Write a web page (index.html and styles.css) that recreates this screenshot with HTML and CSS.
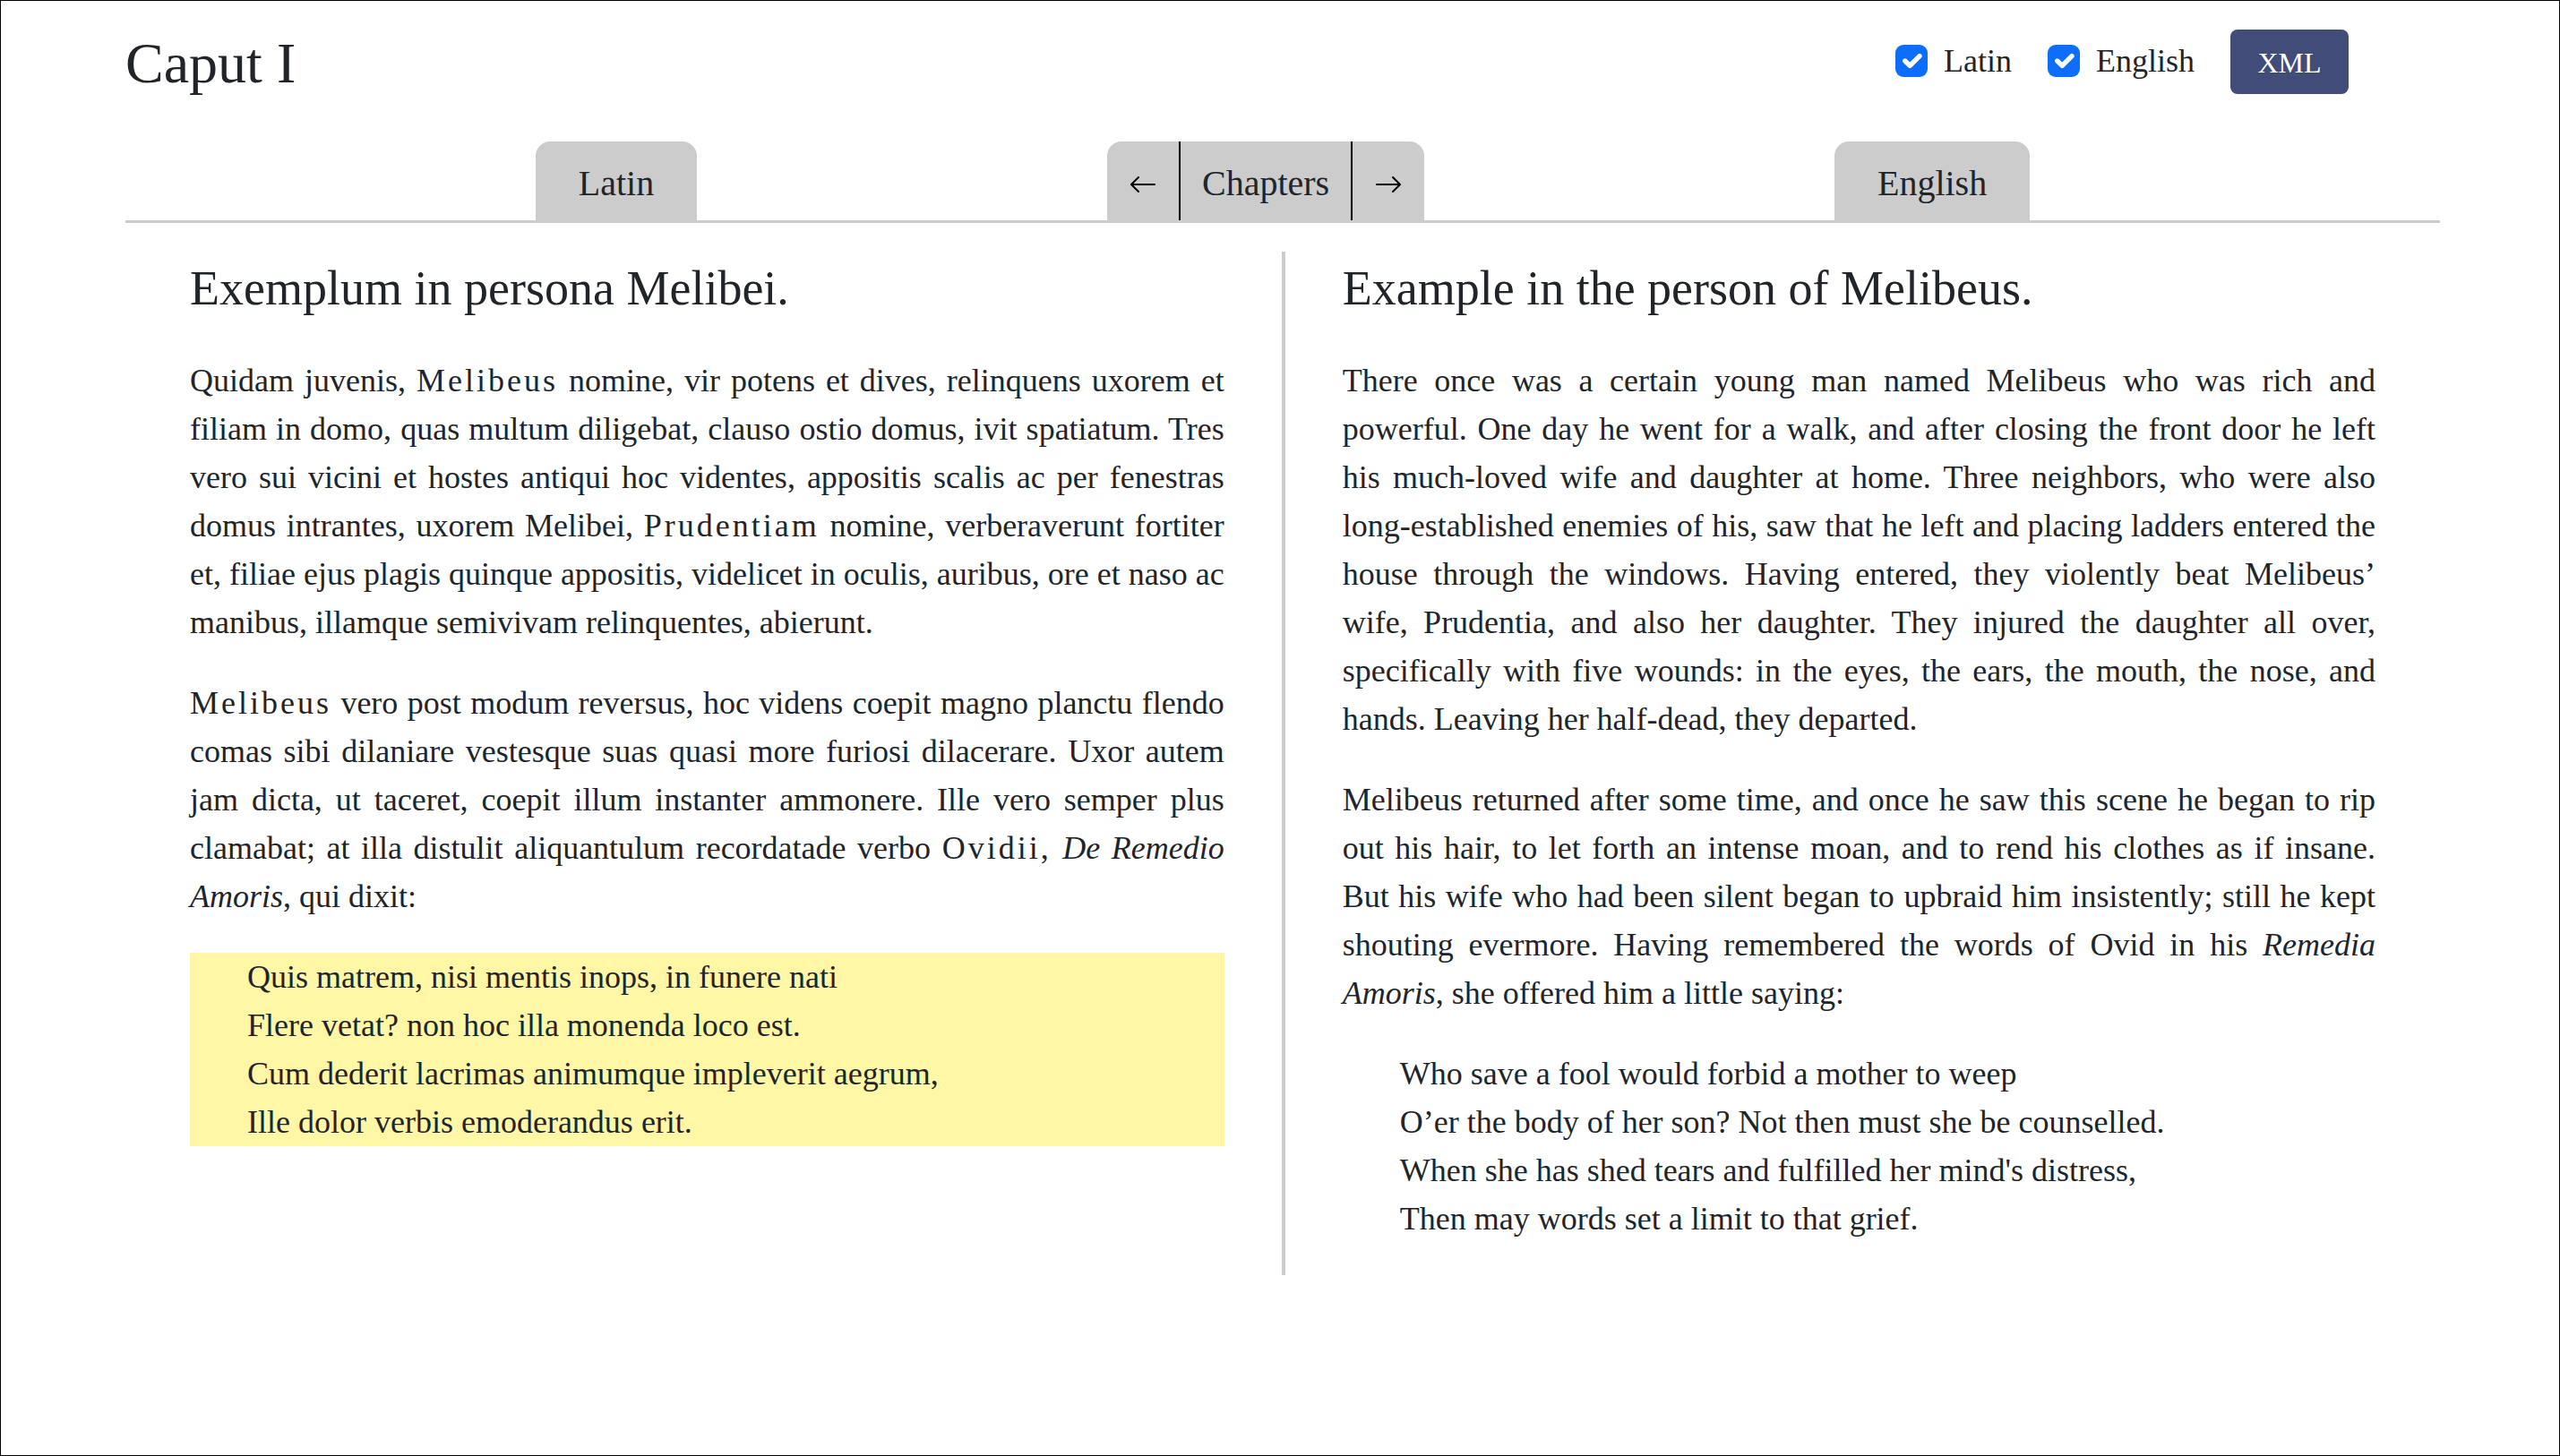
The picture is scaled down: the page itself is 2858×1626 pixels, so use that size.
FILE: index.html
```html
<!DOCTYPE html>
<html lang="en">
<head>
<meta charset="utf-8">
<title>Caput I</title>
<link rel="stylesheet" href="styles.css">
</head>
<body>
<div class="page">
  <header class="topbar">
    <h1 class="title">Caput I</h1>
    <div class="controls">
      <label class="toggle"><input class="toggle-box" type="checkbox" checked><span>Latin</span></label>
      <label class="toggle"><input class="toggle-box" type="checkbox" checked><span>English</span></label>
      <button class="xml-button" type="button">XML</button>
    </div>
  </header>

  <nav class="tabs">
    <h3 class="tab">Latin</h3>
    <div class="tab pager">
      <a class="pager-arrow" href="#" aria-label="Previous chapter">
        <svg class="arrow" viewBox="0 0 16 16"><path fill-rule="evenodd" d="M15 8a.5.5 0 0 0-.5-.5H2.707l3.147-3.146a.5.5 0 1 0-.708-.708l-4 4a.5.5 0 0 0 0 .708l4 4a.5.5 0 0 0 .708-.708L2.707 8.500H14.500A.5.5 0 0 0 15 8z"/></svg>
      </a>
      <button class="pager-list" type="button">Chapters</button>
      <a class="pager-arrow" href="#" aria-label="Next chapter">
        <svg class="arrow" viewBox="0 0 16 16"><path fill-rule="evenodd" d="M1 8a.5.5 0 0 1 .5-.5h11.793l-3.147-3.146a.5.5 0 0 1 .708-.708l4 4a.5.5 0 0 1 0 .708l-4 4a.5.5 0 0 1-.708-.708L13.293 8.500H1.500A.5.5 0 0 1 1 8z"/></svg>
      </a>
    </div>
    <h3 class="tab">English</h3>
  </nav>

  <main class="columns">
    <section class="column" lang="la">
      <h2 class="heading">Exemplum in persona Melibei.</h2>
      <p class="prose">Quidam juvenis, <span class="name">Melibeus</span> nomine, vir potens et dives, relinquens uxorem et filiam in domo, quas multum diligebat, clauso ostio domus, ivit spatiatum. Tres vero sui vicini et hostes antiqui hoc videntes, appositis scalis ac per fenestras domus intrantes, uxorem Melibei, <span class="name">Prudentiam</span> nomine, verberaverunt fortiter <span class="unbroken">et, filiae ejus plagis quinque appositis, videlicet in oculis, auribus, ore et naso ac</span> manibus, illamque semivivam relinquentes, abierunt.</p>
      <p class="prose"><span class="name">Melibeus</span> vero post modum reversus, hoc videns coepit magno planctu flendo comas sibi dilaniare vestesque suas quasi more furiosi dilacerare. Uxor autem jam dicta, ut taceret, coepit illum instanter ammonere. Ille vero semper plus clamabat; at illa distulit aliquantulum recordatade verbo <span class="name">Ovidii,</span> <i>De Remedio Amoris</i>, qui dixit:</p>
      <p class="verse verse-marked">Quis matrem, nisi mentis inops, in funere nati<br>Flere vetat? non hoc illa monenda loco est.<br>Cum dederit lacrimas animumque impleverit aegrum,<br>Ille dolor verbis emoderandus erit.</p>
    </section>
    <div class="divider"></div>
    <section class="column">
      <h2 class="heading">Example in the person of Melibeus.</h2>
      <p class="prose">There once was a certain young man named Melibeus who was rich and powerful. One day he went for a walk, and after closing the front door he left his much-loved wife and daughter at home. Three neighbors, who were also long-established enemies of his, saw that he left and placing ladders entered the house through the windows. Having entered, they violently beat Melibeus’ wife, Prudentia, and also her daughter. They injured the daughter all over, specifically with five wounds: in the eyes, the ears, the mouth, the nose, and hands. Leaving her half-dead, they departed.</p>
      <p class="prose">Melibeus returned after some time, and once he saw this scene he began to rip out his hair, to let forth an intense moan, and to rend his clothes as if insane. But his wife who had been silent began to upbraid him insistently; still he kept shouting evermore. Having remembered the words of Ovid in his <i>Remedia Amoris</i>, she offered him a little saying:</p>
      <p class="verse">Who save a fool would forbid a mother to weep<br>O’er the body of her son? Not then must she be counselled.<br>When she has shed tears and fulfilled her mind's distress,<br>Then may words set a limit to that grief.</p>
    </section>
  </main>
</div>
</body>
</html>
```

FILE: styles.css
```css
* {
  box-sizing: border-box;
}

body {
  margin: 0;
  min-height: 100vh;
  border: 1px solid #000;
  background: #fff;
  color: #212529;
  font-family: "Liberation Serif", "Times New Roman", serif;
  font-size: 36px;
  line-height: 54px;
}

h1, h2, h3, p {
  margin: 0;
  font-weight: 400;
}

button {
  border: 0;
  color: inherit;
  font: inherit;
}

.page {
  padding: 32px 133px 0 139px;
}

.topbar {
  display: flex;
  justify-content: space-between;
  align-items: flex-start;
  padding-right: 102px;
}

.title {
  font-size: 64px;
  line-height: 76px;
}

.controls {
  display: flex;
  align-items: center;
  gap: 40px;
}

.toggle {
  display: flex;
  align-items: center;
  gap: 18px;
  padding-bottom: 2px;
}

.toggle-box {
  appearance: none;
  width: 36px;
  height: 36px;
  margin: 0;
  border-radius: 9px;
  background: #0d6efd url("data:image/svg+xml,%3csvg xmlns='http://www.w3.org/2000/svg' viewBox='0 0 20 20'%3e%3cpath fill='none' stroke='%23fff' stroke-linecap='round' stroke-linejoin='round' stroke-width='3' d='M6 10l3 3l6-6'/%3e%3c/svg%3e") center / contain;
}

.xml-button {
  min-width: 132px;
  height: 72px;
  border-radius: 8px;
  background: #414d78;
  color: #fff;
  font-size: 32px;
  line-height: 72px;
}

.tabs {
  display: flex;
  justify-content: space-evenly;
  margin-top: 49px;
  border-bottom: 3px solid #ccc;
}

.tab {
  padding: 6px 48px 0;
  border-radius: 16px 16px 0 0;
  background: #ccc;
  font-size: 40px;
  line-height: 82px;
}

.pager {
  display: flex;
  padding: 0;
}

.pager-arrow {
  display: flex;
  align-items: center;
  padding: 8px 24px 0;
  color: #000;
}

.arrow {
  width: 32px;
  height: 32px;
  fill: currentColor;
}

.pager-list {
  padding: 6px 24px 0;
  border: solid #000;
  border-width: 0 2px;
  background: none;
}

.columns {
  display: grid;
  grid-template-columns: 1fr 4px 1fr;
  column-gap: 64px;
  margin-top: 32px;
  padding: 0 72px;
}

.column {
  padding-top: 13px;
}

.divider {
  background: #ccc;
}

.heading {
  margin-bottom: 48px;
  font-size: 54px;
  line-height: 56px;
}

.prose,
.verse {
  margin-bottom: 36px;
}

.prose {
  text-align: justify;
}

.name {
  letter-spacing: 3px;
}

@media (min-width: 2800px) {
  .unbroken {
    white-space: nowrap;
  }
}

.verse {
  padding-left: 64px;
}

.verse-marked {
  background: #fff6a6;
}
```
